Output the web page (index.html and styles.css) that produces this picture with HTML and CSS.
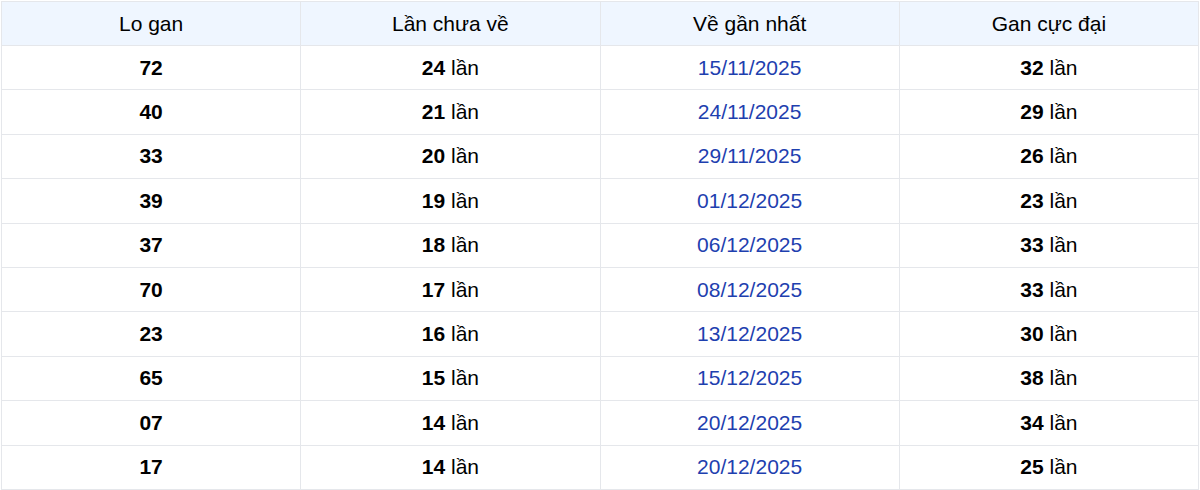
FILE: index.html
```html
<!DOCTYPE html>
<html lang="vi">
<head>
<meta charset="utf-8">
<link rel="stylesheet" href="styles.css">
</head>
<body>
<table class="gan-table">
  <thead>
    <tr><th>Lo gan</th><th>Lần chưa về</th><th>Về gần nhất</th><th>Gan cực đại</th></tr>
  </thead>
  <tbody>
    <tr><td><b>72</b></td><td><b>24</b> lần</td><td class="date">15/11/2025</td><td><b>32</b> lần</td></tr>
    <tr><td><b>40</b></td><td><b>21</b> lần</td><td class="date">24/11/2025</td><td><b>29</b> lần</td></tr>
    <tr><td><b>33</b></td><td><b>20</b> lần</td><td class="date">29/11/2025</td><td><b>26</b> lần</td></tr>
    <tr><td><b>39</b></td><td><b>19</b> lần</td><td class="date">01/12/2025</td><td><b>23</b> lần</td></tr>
    <tr><td><b>37</b></td><td><b>18</b> lần</td><td class="date">06/12/2025</td><td><b>33</b> lần</td></tr>
    <tr><td><b>70</b></td><td><b>17</b> lần</td><td class="date">08/12/2025</td><td><b>33</b> lần</td></tr>
    <tr><td><b>23</b></td><td><b>16</b> lần</td><td class="date">13/12/2025</td><td><b>30</b> lần</td></tr>
    <tr><td><b>65</b></td><td><b>15</b> lần</td><td class="date">15/12/2025</td><td><b>38</b> lần</td></tr>
    <tr><td><b>07</b></td><td><b>14</b> lần</td><td class="date">20/12/2025</td><td><b>34</b> lần</td></tr>
    <tr><td><b>17</b></td><td><b>14</b> lần</td><td class="date">20/12/2025</td><td><b>25</b> lần</td></tr>
  </tbody>
</table>
</body>
</html>
```
FILE: styles.css
```css
html, body {
  margin: 0;
  padding: 0;
  background: #fff;
}
body {
  padding: 1px;
  font-family: "Liberation Sans", Arial, sans-serif;
  color: #000;
}
.gan-table {
  width: 1198px;
  border-collapse: collapse;
  table-layout: fixed;
  font-size: 21px;
}
.gan-table th,
.gan-table td {
  border: 1px solid #e5e7eb;
  text-align: center;
  padding: 0;
  line-height: 24px;
}
.gan-table th {
  background: #eff6ff;
  font-weight: normal;
  height: 43px;
}
.gan-table td {
  height: 43.4px;
}
.gan-table b {
  font-weight: bold;
}
.gan-table .date {
  color: #1e40af;
}
```
